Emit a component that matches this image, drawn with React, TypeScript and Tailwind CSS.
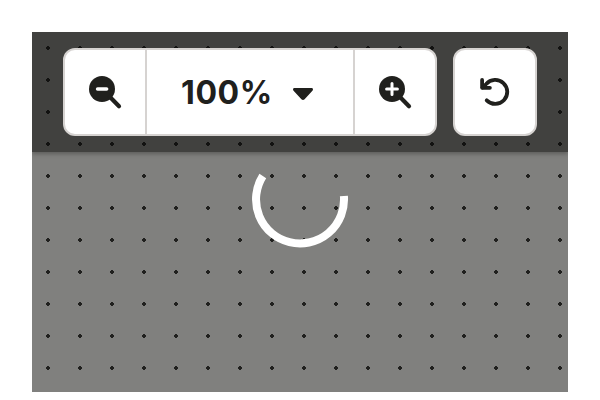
import type { ReactNode } from "react";

function ZoomIcon({ plus = false }: { plus?: boolean }) {
  return (
    <svg width="42" height="42" viewBox="0 1 42 42" fill="none" strokeLinecap="round">
      <circle cx="18" cy="19" r="13" fill="#20201d" />
      <path d="M26 27l9 9.2" stroke="#20201d" strokeWidth="4.2" />
      {plus ? (
        <path d="M12.6 19h10.8M18 13.6v10.8" stroke="#fff" strokeWidth="3" />
      ) : (
        <path d="M13.6 19h9" stroke="#fff" strokeWidth="3.6" />
      )}
    </svg>
  );
}

function UndoIcon() {
  return (
    <svg
      width="42"
      height="42"
      viewBox="0 1 42 42"
      fill="none"
      stroke="#20201d"
      strokeWidth="3.8"
      strokeLinecap="round"
      strokeLinejoin="round"
    >
      <path d="M8.1 10v7.8h7.8" />
      <path d="M8.6 17.5L12.2 14A12 12 0 1 1 12.7 30.3" />
    </svg>
  );
}

function Panel({ children, className }: { children: ReactNode; className: string }) {
  return (
    <div className={`flex h-[88px] overflow-hidden rounded-xl border-2 border-[#d6d3d1] bg-white ${className}`}>
      {children}
    </div>
  );
}

export default function App() {
  return (
    <main className="h-[400px] w-[600px] bg-white px-8 pt-8 font-['Inter',sans-serif] text-[#20201d]">
      <section className="relative h-[360px] w-[536px] overflow-hidden bg-[#80807e]">
        <header className="h-[120px] bg-[#41413f] pt-4 shadow-[0_2px_4px_rgba(0,0,0,0.28)]" />
        <svg className="absolute inset-0" width="536" height="360">
          <defs>
            <pattern id="dots" width="32" height="32" patternUnits="userSpaceOnUse">
              <path d="M15 14h2v1h1v2h-1v1h-2v-1h-1v-2h1z" fill="#20201e" shapeRendering="crispEdges" />
            </pattern>
            <pattern id="dots-dark" width="32" height="32" patternUnits="userSpaceOnUse">
              <path d="M15 14h2v1h1v2h-1v1h-2v-1h-1v-2h1z" fill="#121211" shapeRendering="crispEdges" />
            </pattern>
          </defs>
          <rect width="536" height="120" fill="url(#dots-dark)" />
          <rect y="120" width="536" height="240" fill="url(#dots)" />
          <path d="M230.8 144A44 44 0 1 0 311.9 164" fill="none" stroke="#fff" strokeWidth="8" />
        </svg>
        <div className="absolute inset-x-0 top-4 flex gap-4 pl-[31px]">
          <Panel className="w-[374px]">
            <button className="flex w-20 items-center justify-center" aria-label="Zoom out">
              <ZoomIcon />
            </button>
            <button className="flex w-[210px] items-center border-x-2 border-[#d6d3d1] pl-[34px]">
              <span className="w-[90px] pt-0.5 text-[32px] leading-10 font-bold tracking-[0.6px]">100%</span>
              <svg className="mt-1 ml-[22px]" width="20" height="12" viewBox="0 0 20 12" fill="#20201d">
                <path d="M1.5 0h17Q20 0 20 1.4q0 .8-.8 1.5l-7.6 8.3q-1.6 1.6-3.2 0L.8 2.9Q0 2.2 0 1.4 0 0 1.5 0z" />
              </svg>
            </button>
            <button className="flex w-20 items-center justify-center" aria-label="Zoom in">
              <ZoomIcon plus />
            </button>
          </Panel>
          <Panel className="w-[84px]">
            <button className="flex w-20 items-center justify-center" aria-label="Reset">
              <UndoIcon />
            </button>
          </Panel>
        </div>
      </section>
    </main>
  );
}
